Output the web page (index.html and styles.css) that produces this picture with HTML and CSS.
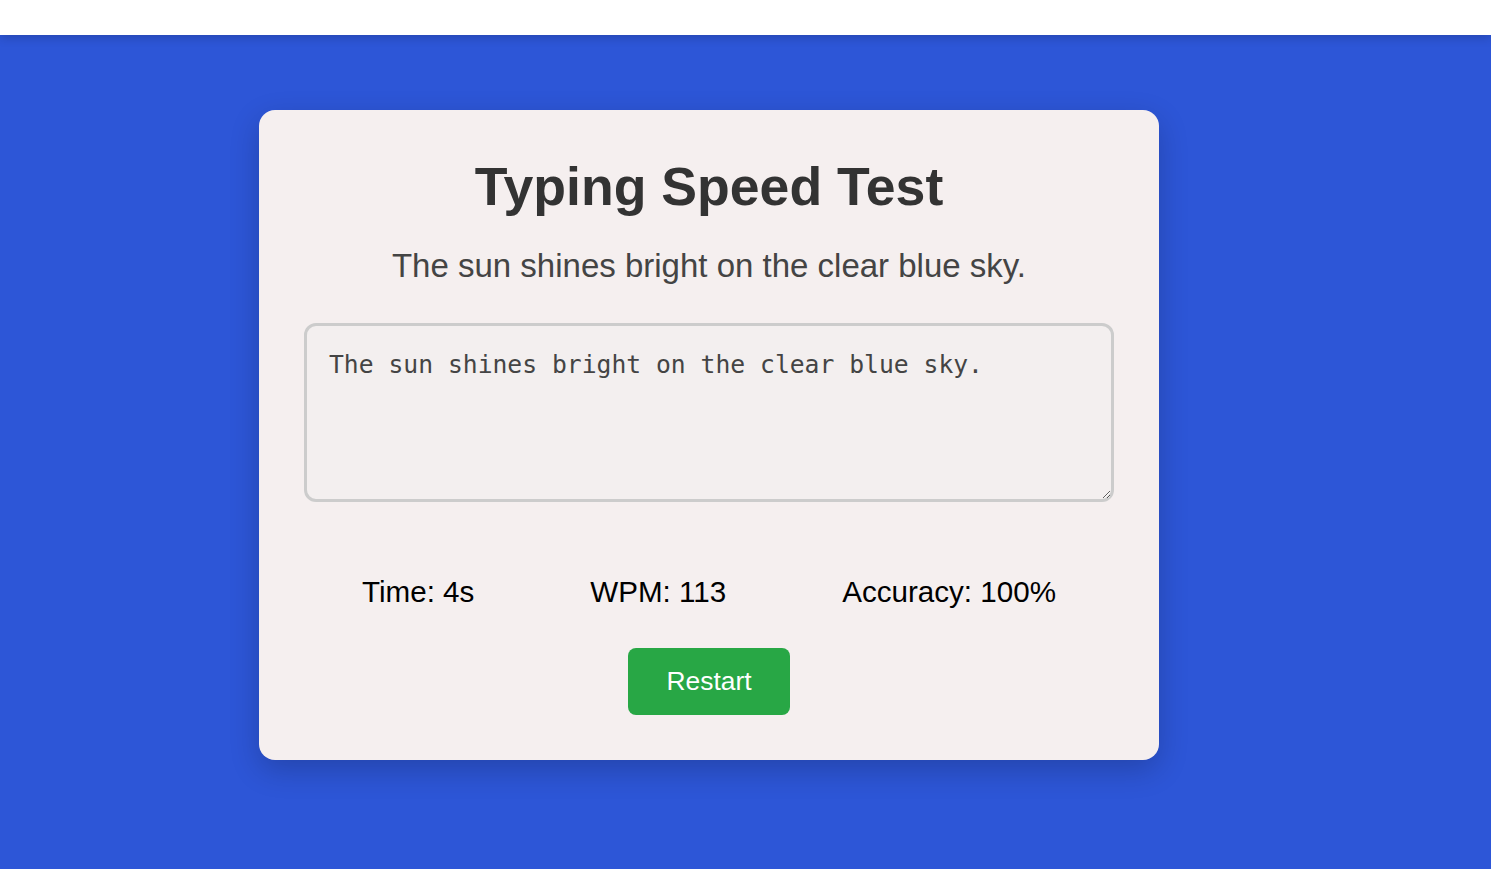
FILE: index.html
```html
<!DOCTYPE html>
<html lang="en">
<head>
<meta charset="utf-8">
<title>Typing Speed Test</title>
<link rel="stylesheet" href="styles.css">
</head>
<body>
<header class="topbar"></header>
<main class="stage">
  <section class="card">
    <h1 class="title">Typing Speed Test</h1>
    <p class="prompt">The sun shines bright on the clear blue sky.</p>
    <textarea class="input" spellcheck="false">The sun shines bright on the clear blue sky.</textarea>
    <div class="stats">
      <span class="stat">Time: 4s</span>
      <span class="stat">WPM: 113</span>
      <span class="stat">Accuracy: 100%</span>
    </div>
    <div class="actions">
      <button class="restart" type="button">Restart</button>
    </div>
  </section>
</main>
</body>
</html>
```
FILE: styles.css
```css
html, body {
  margin: 0;
  padding: 0;
  height: 100%;
}
body {
  font-family: "Liberation Sans", Arial, sans-serif;
  background: #2d56d7;
  display: flex;
  flex-direction: column;
  overflow: hidden;
}
.topbar {
  height: 35px;
  background: #ffffff;
  box-shadow: 0 2px 10px rgba(0, 0, 0, 0.2);
  position: relative;
  z-index: 1;
  flex: none;
}
.stage {
  flex: 1;
  padding: 75px 0 0 259px;
}
.card {
  width: 900px;
  height: 650px;
  box-sizing: border-box;
  padding: 46px 45px 45px;
  background: #f5efef;
  border-radius: 16px;
  box-shadow: 0 10px 30px rgba(0, 0, 0, 0.2);
}
.title {
  margin: 0;
  font-size: 53.6px;
  font-weight: 700;
  color: #333333;
  text-align: center;
  line-height: 61px;
}
.prompt {
  margin: 30px 0 0;
  font-size: 33px;
  color: #444444;
  text-align: center;
  line-height: 38px;
}
.input {
  display: block;
  margin: 38px 0 0;
  width: 100%;
  height: 179px;
  box-sizing: border-box;
  padding: 24px 22px 18px;
  border: 3px solid #cccccc;
  border-radius: 12px;
  background: #f3efef;
  color: #444444;
  font-family: "DejaVu Sans Mono", monospace;
  font-size: 24.7px;
  line-height: 1.2;
  outline: none;
}
.stats {
  margin-top: 73px;
  display: flex;
  justify-content: space-around;
  font-size: 29.6px;
  line-height: 34px;
  color: #000000;
}
.actions {
  margin-top: 39px;
  display: flex;
  justify-content: center;
}
.restart {
  width: 162px;
  height: 67px;
  border: none;
  border-radius: 8px;
  background: #28a745;
  color: #ffffff;
  font-family: "Liberation Sans", Arial, sans-serif;
  font-size: 26.4px;
  padding: 0;
}
```
